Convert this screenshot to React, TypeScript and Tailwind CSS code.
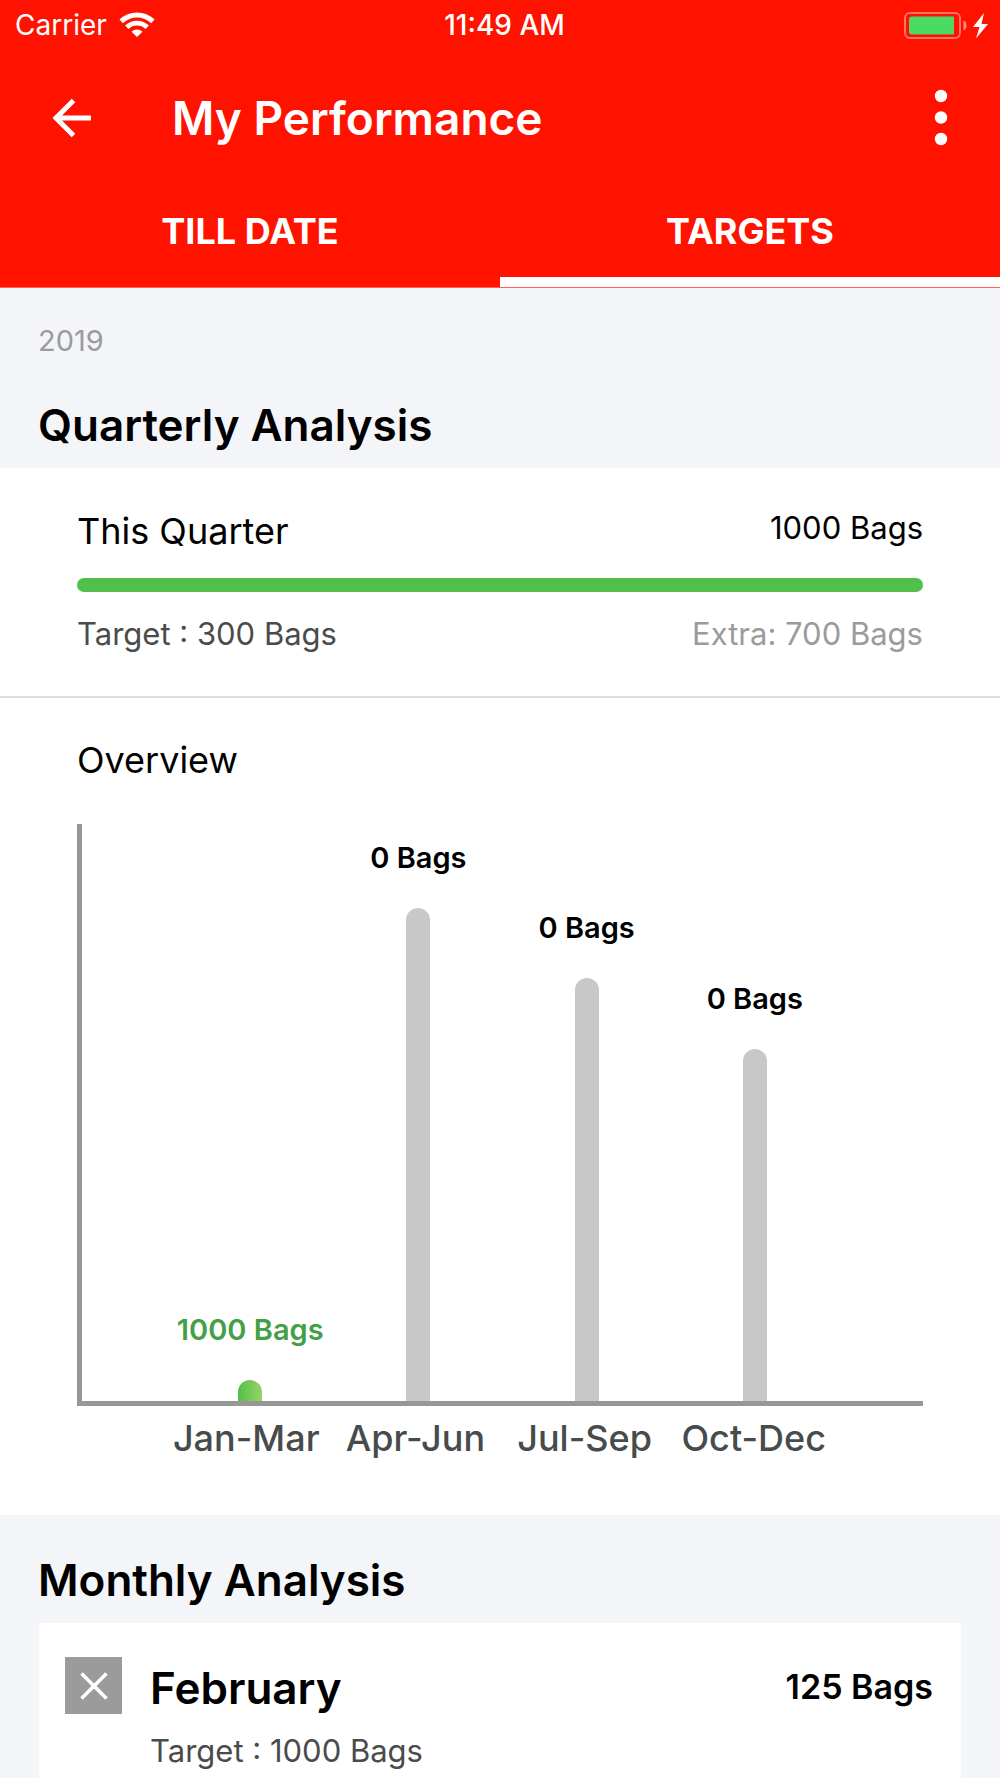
import React, { useState } from 'react';

type TabKey = 'till-date' | 'targets';

interface QuarterBar {
  label: string;
  bags: number;
  height: number;
}

interface MonthTarget {
  name: string;
  bags: number;
  target: number;
}

const tabs: { key: TabKey; title: string }[] = [
  { key: 'till-date', title: 'TILL DATE' },
  { key: 'targets', title: 'TARGETS' },
];

const quarters: QuarterBar[] = [
  { label: 'Jan-Mar', bags: 1000, height: 21 },
  { label: 'Apr-Jun', bags: 0, height: 493 },
  { label: 'Jul-Sep', bags: 0, height: 423 },
  { label: 'Oct-Dec', bags: 0, height: 352 },
];

const months: MonthTarget[] = [{ name: 'February', bags: 125, target: 1000 }];

const StatusBar: React.FC = () => (
  <div className="flex h-[50px] items-center pr-3 pl-[15px] text-[28px]">
    <div className="flex flex-1 items-center gap-3">
      <span>Carrier</span>
      <svg width="36" height="26" viewBox="0 0 36 26" fill="currentColor" aria-hidden="true">
        <path d="M18 25l-5.500-5.300a8 8 0 0 1 11 0z" />
        <path d="M7.800 15.200a14.600 14.600 0 0 1 20.400 0" fill="none" stroke="currentColor" strokeWidth="4.800" />
        <path d="M2.200 9.400a22.600 22.600 0 0 1 31.600 0" fill="none" stroke="currentColor" strokeWidth="5" />
      </svg>
    </div>
    <span className="pl-1.5 font-medium">11:49 AM</span>
    <div className="flex flex-1 justify-end">
      <svg width="86" height="28" viewBox="0 0 86 28" aria-hidden="true">
        <rect x="3" y="2" width="55" height="25" rx="5" fill="none" stroke="#fff" strokeOpacity="0.4" strokeWidth="2" />
        <path d="M10 5.500h42v18H10a3 3 0 0 1-3-3v-12a3 3 0 0 1 3-3z" fill="#4cd964" />
        <path d="M61.500 9.500c4 1.500 4 8.500 0 10z" fill="#fff" fillOpacity="0.5" />
        <path d="M82 2L71 16h6.500L74 27.500 86 13h-6.500z" fill="#fff" />
      </svg>
    </div>
  </div>
);

const QuarterChart: React.FC = () => (
  <div>
    <div className="flex h-[582px] items-end justify-center border-b-[5px] border-l-[5px] border-[#979797]">
      {quarters.map((quarter) => (
        <div key={quarter.label} className="flex w-1/5 flex-col items-center">
          <span
            className={`mb-[30px] text-[29px] leading-10 font-semibold whitespace-nowrap ${
              quarter.bags > 0 ? 'text-[#43a047]' : 'text-black'
            }`}
          >
            {quarter.bags} Bags
          </span>
          <div
            className={`w-6 rounded-t-full ${
              quarter.bags > 0 ? 'bg-linear-to-r from-[#4fc04a] to-[#97d267]' : 'bg-[#c8c8c8]'
            }`}
            style={{ height: quarter.height }}
          />
        </div>
      ))}
    </div>
    <div className="mt-3 flex justify-center">
      {quarters.map((quarter) => (
        <span
          key={quarter.label}
          className="w-1/5 text-center text-[36px] leading-10 font-medium whitespace-nowrap text-[#474b4b]"
        >
          {quarter.label}
        </span>
      ))}
    </div>
  </div>
);

export default function App() {
  const [activeTab, setActiveTab] = useState<TabKey>('targets');

  return (
    <div className="flex min-h-screen flex-col bg-[#f4f5f8] font-['Inter',sans-serif] text-black">
      {/* Header */}
      <header className="border-b border-[#ff6157] bg-[#ff1200] text-white">
        <StatusBar />
        <div className="flex h-[136px] items-center pr-[39px] pl-[52px]">
          <button type="button" aria-label="Back" className="flex size-10 items-center justify-center">
            <svg width="40" height="40" viewBox="0 0 40 40" fill="none" stroke="currentColor" strokeWidth="5" aria-hidden="true">
              <path d="M21.500 2.500L4 20l17.500 17.500M4 20h35" />
            </svg>
          </button>
          <h1 className="ml-20 flex-1 text-[46px] leading-[58px] font-semibold">My Performance</h1>
          <button type="button" aria-label="More options" className="flex h-14 w-10 items-center justify-center">
            <svg width="14" height="58" viewBox="0 0 14 58" fill="currentColor" aria-hidden="true">
              <circle cx="7" cy="7" r="6.200" />
              <circle cx="7" cy="28.500" r="6.200" />
              <circle cx="7" cy="50" r="6.200" />
            </svg>
          </button>
        </div>
        <div role="tablist" className="flex">
          {tabs.map((tab) => (
            <button
              key={tab.key}
              type="button"
              role="tab"
              aria-selected={activeTab === tab.key}
              onClick={() => setActiveTab(tab.key)}
              className={`h-[101px] flex-1 border-b-[10px] pb-0.5 text-[36px] font-bold ${
                activeTab === tab.key ? 'border-white' : 'border-transparent'
              }`}
            >
              {tab.title}
            </button>
          ))}
        </div>
      </header>

      {/* Quarterly */}
      <div className="px-[38px] pt-[33px] pb-[19px]">
        <p className="text-[29px] leading-10 text-[#9b9b9e]">2019</p>
        <h2 className="mt-10 text-[44px] leading-[48px] font-semibold">Quarterly Analysis</h2>
      </div>

      <section className="bg-white">
        <div className="border-b-2 border-[#dedede] px-[77px] pt-[39px] pb-[42px]">
          <div className="flex items-start justify-between">
            <h3 className="text-[36px] leading-[48px]">This Quarter</h3>
            <span className="text-[31px] leading-[42px]">1000 Bags</span>
          </div>
          <div className="mt-[23px] h-3.5 rounded-full bg-[#50c04a]" />
          <div className="mt-[22px] flex justify-between text-[31px] leading-10">
            <span className="text-[#4a4c4c]">Target : 300 Bags</span>
            <span className="text-[#9b9b9b]">Extra: 700 Bags</span>
          </div>
        </div>
        <div className="px-[77px] pt-[38px] pb-[57px]">
          <h3 className="mb-10 text-[36px] leading-[48px]">Overview</h3>
          <QuarterChart />
        </div>
      </section>

      {/* Monthly */}
      <h2 className="px-[38px] pt-[41px] pb-[19px] text-[44px] leading-[48px] font-semibold">Monthly Analysis</h2>
      <section className="mx-[39px] flex-1 bg-white pt-[34px] pr-7 pl-[26px]">
        {months.map((month) => (
          <div key={month.name}>
            <div className="flex items-start">
              <div className="flex size-[57px] items-center justify-center bg-[#9b9b9b]">
                <svg width="28" height="28" viewBox="0 0 28 28" stroke="#fff" strokeWidth="3.600" aria-hidden="true">
                  <path d="M1.500 1.500l25 25M26.500 1.500l-25 25" />
                </svg>
              </div>
              <h3 className="ml-7 flex-1 text-[44px] leading-[62px] font-semibold">{month.name}</h3>
              <span className="text-[34px] leading-[60px] font-semibold">{month.bags} Bags</span>
            </div>
            <p className="mt-3 pl-[85px] text-[31px] leading-10 text-[#4a4c4c]">
              Target : {month.target} Bags
            </p>
          </div>
        ))}
      </section>
    </div>
  );
}
